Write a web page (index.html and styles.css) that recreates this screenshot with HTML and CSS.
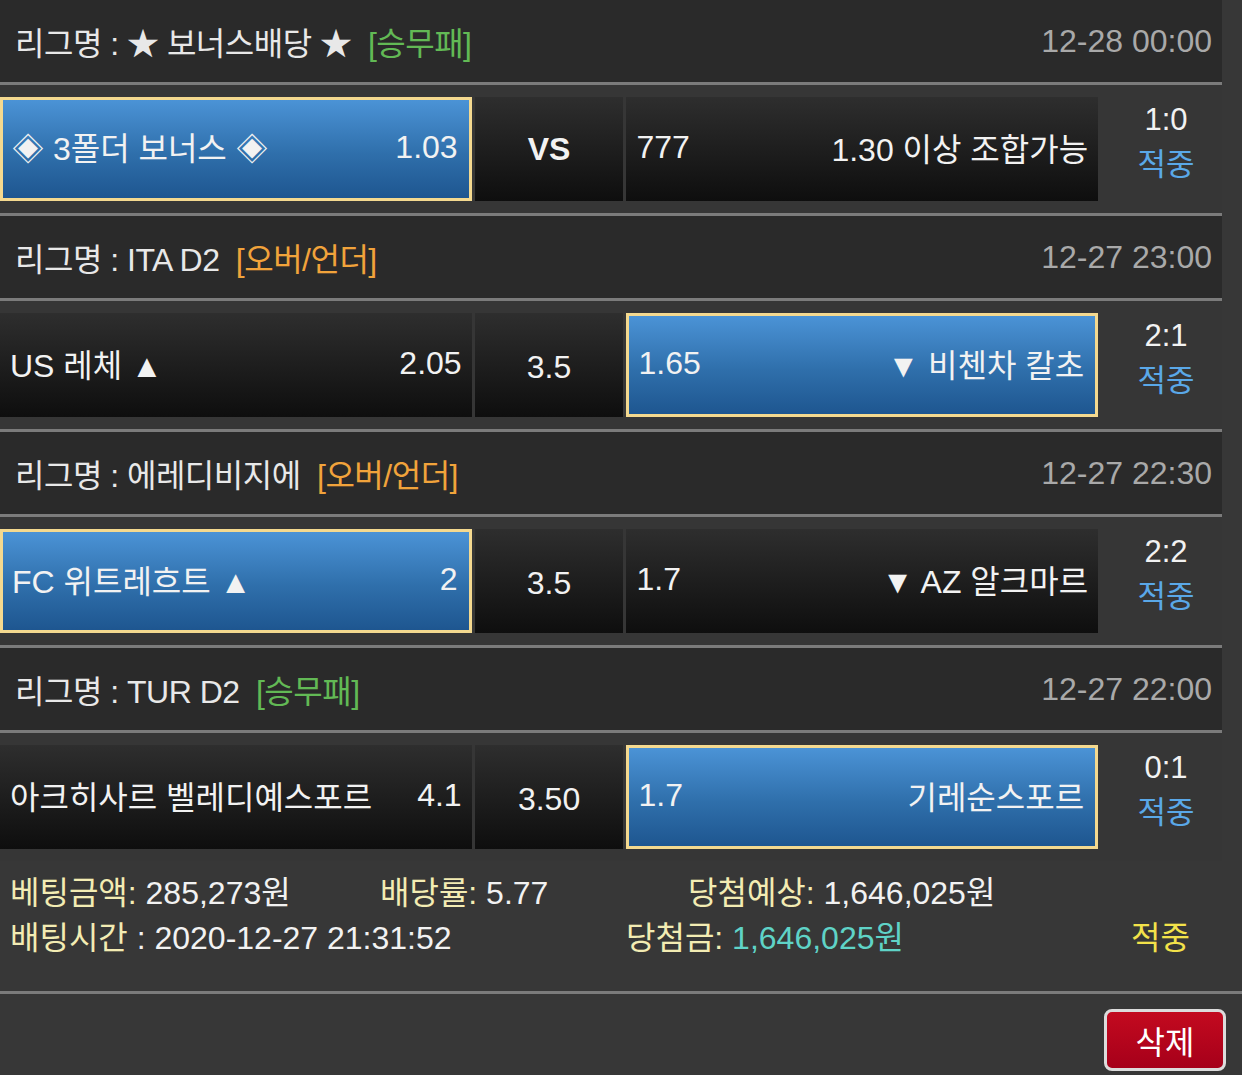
FILE: index.html
```html
<!DOCTYPE html>
<html lang="ko">
<head>
  <meta charset="UTF-8" />
  <meta name="viewport" content="width=device-width, initial-scale=1.0" />
  <title>베팅내역</title>
  <link rel="stylesheet" href="styles.css">
</head>
<body>
  <div id="betList">
    <div class="game">
      <div class="league">
        <span class="name">리그명 : ★ 보너스배당 ★ <span class="type green">[승무패]</span></span>
        <span class="time">12-28 00:00</span>
      </div>
      <div class="picks">
        <div class="pick on"><span>◈ 3폴더 보너스 ◈</span><span>1.03</span></div>
        <div class="mid vs">VS</div>
        <div class="pick"><span>777</span><span>1.30 이상 조합가능</span></div>
        <div class="result"><span class="score">1:0</span><span class="hit">적중</span></div>
      </div>
    </div>

    <div class="game">
      <div class="league">
        <span class="name">리그명 : ITA D2 <span class="type orange">[오버/언더]</span></span>
        <span class="time">12-27 23:00</span>
      </div>
      <div class="picks">
        <div class="pick"><span>US 레체 ▲</span><span>2.05</span></div>
        <div class="mid">3.5</div>
        <div class="pick on"><span>1.65</span><span>▼ 비첸차 칼초</span></div>
        <div class="result"><span class="score">2:1</span><span class="hit">적중</span></div>
      </div>
    </div>

    <div class="game">
      <div class="league">
        <span class="name">리그명 : 에레디비지에 <span class="type orange">[오버/언더]</span></span>
        <span class="time">12-27 22:30</span>
      </div>
      <div class="picks">
        <div class="pick on"><span>FC 위트레흐트 ▲</span><span>2</span></div>
        <div class="mid">3.5</div>
        <div class="pick"><span>1.7</span><span>▼ AZ 알크마르</span></div>
        <div class="result"><span class="score">2:2</span><span class="hit">적중</span></div>
      </div>
    </div>

    <div class="game">
      <div class="league">
        <span class="name">리그명 : TUR D2 <span class="type green">[승무패]</span></span>
        <span class="time">12-27 22:00</span>
      </div>
      <div class="picks">
        <div class="pick"><span>아크히사르 벨레디예스포르</span><span>4.1</span></div>
        <div class="mid">3.50</div>
        <div class="pick on"><span>1.7</span><span>기레순스포르</span></div>
        <div class="result"><span class="score">0:1</span><span class="hit">적중</span></div>
      </div>
    </div>
  </div>

  <div id="summary">
    <div class="line">
      <span class="cell amount"><span class="label">베팅금액:</span> 285,273원</span>
      <span class="cell rate"><span class="label">배당률:</span> 5.77</span>
      <span class="cell"><span class="label">당첨예상:</span> 1,646,025원</span>
    </div>
    <div class="line">
      <span class="cell when"><span class="label">배팅시간</span> : 2020-12-27 21:31:52</span>
      <span class="cell prize"><span class="label">당첨금:</span> <span class="won">1,646,025원</span></span>
      <span class="cell status">적중</span>
    </div>
  </div>

  <div id="actions">
    <button id="delete">삭제</button>
  </div>
</body>
</html>
```

FILE: styles.css
```css
body {
  margin: 0;
  background-color: #373737;
  color: #f2f2f2;
  font-family: "Liberation Sans", "Noto Sans CJK KR", sans-serif;
  font-size: 32px;
  width: 1242px;
  height: 1075px;
  overflow: hidden;
}

#betList {
  width: 1222px;
}

.league {
  display: flex;
  justify-content: space-between;
  align-items: center;
  height: 82px;
  padding: 0 10px 0 15px;
  background-color: #2a2a2a;
  border-bottom: 3px solid #7b7b7b;
  color: #e8e8e8;
}

.name {
  letter-spacing: -0.5px;
}

.type {
  margin-left: 8px;
}

.green {
  color: #62b955;
}

.orange {
  color: #f1a33b;
}

.time {
  color: #a9a9a9;
}

.picks {
  display: flex;
  padding: 12px 0;
  background-color: #363636;
  border-bottom: 3px solid #7b7b7b;
}

.game:last-child .picks {
  border-bottom: none;
}

.pick {
  box-sizing: border-box;
  width: 472px;
  height: 104px;
  display: flex;
  justify-content: space-between;
  align-items: center;
  padding: 0 10px 4px;
  background: linear-gradient(#2e2e2e, #0e0e0e);
  white-space: nowrap;
}

.pick:last-of-type {
  width: 471px;
}

.pick.on {
  border: 3px solid #f4d98f;
  background: linear-gradient(#4b93d6, #2f6fab 55%, #1e5690);
  padding: 0 11px 4px 9px;
}

.mid {
  width: 149px;
  height: 104px;
  margin: 0 3px;
  display: flex;
  justify-content: center;
  align-items: center;
  background: linear-gradient(#2e2e2e, #0e0e0e);
  padding-top: 4px;
  box-sizing: border-box;
}

.mid.vs {
  font-weight: bold;
  padding-top: 0;
}

.result {
  width: 124px;
  box-sizing: border-box;
  padding-left: 12px;
  display: flex;
  flex-direction: column;
  align-items: center;
  font-size: 31px;
  line-height: 45px;
}

.hit {
  color: #5aa8e8;
}

#summary {
  padding: 10px 0 30px 10px;
  border-bottom: 3px solid #7b7b7b;
  line-height: 45px;
}

.line {
  display: flex;
  white-space: nowrap;
}

.label {
  color: #f3ecb3;
}

.amount {
  width: 370px;
}

.rate {
  width: 308px;
}

.when {
  width: 616px;
}

.prize {
  width: 505px;
}

.won {
  color: #5fd3c7;
}

.status {
  color: #f3e24a;
}

#actions {
  display: flex;
  justify-content: flex-end;
  padding: 15px 16px 0 0;
}

#delete {
  width: 122px;
  height: 62px;
  font-family: inherit;
  font-size: 32px;
  color: white;
  background: linear-gradient(#c30a1f, #a6001a);
  border: 3px solid #dcdcdc;
  border-radius: 8px;
  cursor: pointer;
}
```
